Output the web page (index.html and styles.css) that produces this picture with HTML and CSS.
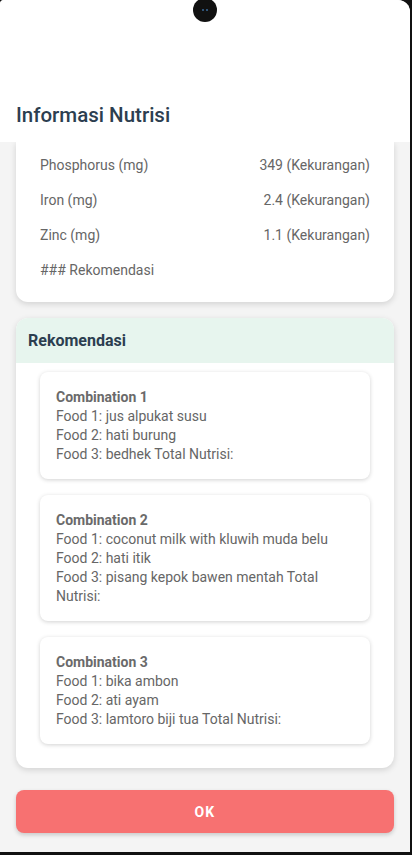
FILE: index.html
```html
<!DOCTYPE html>
<html lang="id">
<head>
<meta charset="utf-8">
<title>Informasi Nutrisi</title>
<link rel="stylesheet" href="styles.css">
</head>
<body>
<div class="screen">
  <div class="camera"><span class="lens"></span><span class="lens"></span></div>
  <header class="header">
    <h1 class="title">Informasi Nutrisi</h1>
  </header>
  <main class="content">
    <section class="card nutri-card">
      <div class="row"><span>Phosphorus (mg)</span><span>349 (Kekurangan)</span></div>
      <div class="row"><span>Iron (mg)</span><span>2.4 (Kekurangan)</span></div>
      <div class="row"><span>Zinc (mg)</span><span>1.1 (Kekurangan)</span></div>
      <div class="row"><span>### Rekomendasi</span></div>
    </section>
    <section class="card rec-card">
      <div class="rec-head">Rekomendasi</div>
      <div class="rec-body">
        <div class="combo">
          <div class="combo-title">Combination 1</div>
          <div>Food 1: jus alpukat susu</div>
          <div>Food 2: hati burung</div>
          <div>Food 3: bedhek Total Nutrisi:</div>
        </div>
        <div class="combo">
          <div class="combo-title">Combination 2</div>
          <div>Food 1: coconut milk with kluwih muda belu</div>
          <div>Food 2: hati itik</div>
          <div>Food 3: pisang kepok bawen mentah Total Nutrisi:</div>
        </div>
        <div class="combo">
          <div class="combo-title">Combination 3</div>
          <div>Food 1: bika ambon</div>
          <div>Food 2: ati ayam</div>
          <div>Food 3: lamtoro biji tua Total Nutrisi:</div>
        </div>
      </div>
    </section>
    <button class="ok-btn">OK</button>
  </main>
</div>
</body>
</html>
```

FILE: styles.css
```css
* { box-sizing: border-box; }
html, body {
  margin: 0;
  padding: 0;
  background: #111;
}
body {
  width: 412px;
  height: 855px;
  overflow: hidden;
  font-family: Roboto, "Noto Sans", sans-serif;
}
.screen {
  position: relative;
  width: 410px;
  height: 852px;
  background: #f4f4f4;
  border-top-left-radius: 4px;
  border-top-right-radius: 12px;
  overflow: hidden;
  display: flex;
  flex-direction: column;
}
.camera {
  position: absolute;
  top: -2px;
  left: 193px;
  width: 24px;
  height: 24px;
  border-radius: 50%;
  background: #111;
  display: flex;
  align-items: center;
  justify-content: center;
  gap: 2px;
  z-index: 5;
}
.lens {
  width: 2px;
  height: 2px;
  border-radius: 50%;
  background: #3a6a9a;
}
.header {
  height: 142px;
  background: #fff;
  display: flex;
  align-items: flex-end;
  padding: 0 16px 15px;
  flex-shrink: 0;
  position: relative;
  z-index: 2;
}
.title {
  margin: 0;
  font-size: 20.5px;
  font-weight: 500;
  color: #2c3e50;
  line-height: 24px;
}
.content {
  flex: 1;
  display: flex;
  flex-direction: column;
  padding: 0 16px;
}
.card {
  background: #fff;
  border-radius: 12px;
  box-shadow: 0 2px 6px rgba(0,0,0,0.14);
}
.nutri-card {
  border-top-left-radius: 0;
  border-top-right-radius: 0;
  padding: 5px 24px 15px;
}
.row {
  display: flex;
  justify-content: space-between;
  height: 35px;
  align-items: center;
  font-size: 14px;
  color: #666;
}
.rec-card {
  margin-top: 16px;
  overflow: hidden;
}
.rec-head {
  background: #e7f5ee;
  height: 45px;
  display: flex;
  align-items: center;
  padding: 0 12px;
  font-size: 16px;
  font-weight: 700;
  color: #2c3e50;
}
.rec-body {
  padding: 9px 24px 8px;
  display: flex;
  flex-direction: column;
}
.combo {
  background: #fff;
  border-radius: 8px;
  box-shadow: 0 1px 4px rgba(0,0,0,0.18);
  padding: 16px 16px 15px;
  margin-bottom: 16px;
  font-size: 14px;
  line-height: 19px;
  color: #666;
}
.combo-title {
  font-weight: 700;
  color: #6a6a6a;
}
.ok-btn {
  margin-top: 22px;
  height: 43px;
  border: none;
  border-radius: 8px;
  background: #f77171;
  color: #fff;
  font-family: Roboto, "Noto Sans", sans-serif;
  font-size: 14px;
  font-weight: 700;
  letter-spacing: 1.2px;
  box-shadow: 0 2px 4px rgba(0,0,0,0.18);
}
```
